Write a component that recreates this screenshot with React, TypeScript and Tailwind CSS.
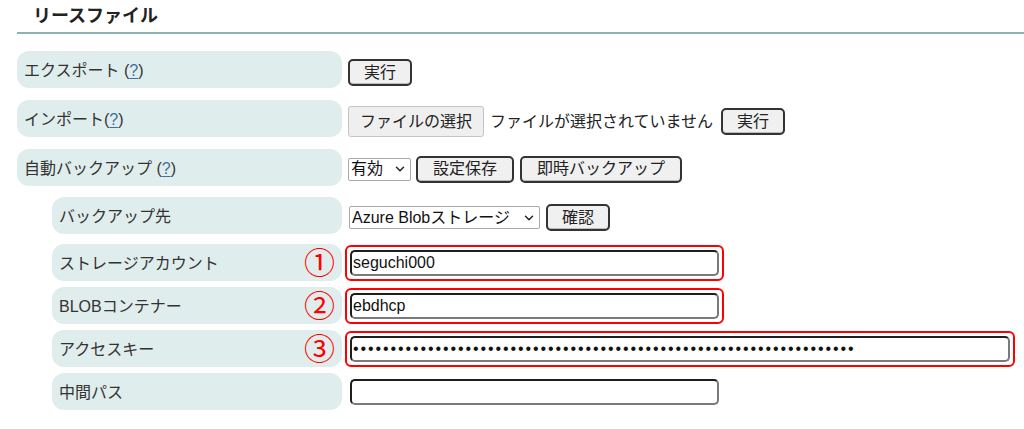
import { ChevronDown } from "lucide-react";
import type { ReactNode } from "react";

function Help() {
  return (
    <>
      (<span className="text-[#3f6fa0] underline underline-offset-2">?</span>)
    </>
  );
}

function Btn({ children, className = "" }: { children: ReactNode; className?: string }) {
  return (
    <button
      className={`h-[27px] rounded-[5px] border-2 border-[#333] bg-[#f0f0f0] px-[14px] text-[16px] leading-none text-[#222] shadow-[inset_0_-1px_0_#bbb] ${className}`}
    >
      {children}
    </button>
  );
}

function Select({ value, width }: { value: string; width: string }) {
  return (
    <div
      className={`flex h-[23px] items-center justify-between rounded-[2px] border border-[#a8a8a8] bg-white pl-[2px] pr-[3px] text-[16px] leading-none text-[#111] ${width}`}
    >
      <span>{value}</span>
      <ChevronDown size={14} strokeWidth={2.5} className="text-[#222]" />
    </div>
  );
}

function Input({ value = "", width, password = false }: { value?: string; width: string; password?: boolean }) {
  return (
    <input
      readOnly
      type={password ? "password" : "text"}
      value={value}
      className={`h-[26px] rounded-[5px] border-2 border-t-[#1e1e1e] border-l-[#1e1e1e] border-r-[#7a7a7a] border-b-[#7a7a7a] bg-white px-[1px] text-[16px] text-[#111] outline-none ${
        password ? "text-[12px] tracking-[1.9px]" : ""
      } ${width}`}
    />
  );
}

function Marked({ children }: { children: ReactNode }) {
  return <div className="-ml-[3px] rounded-[6px] border-2 border-[#ff0000] px-[3px] py-[3px]">{children}</div>;
}

function Row({
  label,
  indent = false,
  mark,
  className,
  children,
}: {
  label: ReactNode;
  indent?: boolean;
  mark?: string;
  className: string;
  children?: ReactNode;
}) {
  return (
    <div className={`flex items-center ${className}`}>
      <div
        className={`relative flex h-[37px] shrink-0 items-center rounded-[12px] bg-[#e0eded] pl-[7px] pt-[2px] text-[16px] text-[#333] ${
          indent ? "ml-[35px] w-[290px]" : "w-[325px]"
        }`}
      >
        {label}
        {mark && (
          <span className="absolute right-[7px] top-1/2 -translate-y-1/2 text-[31px] leading-none text-[#ff0000]">
            {mark}
          </span>
        )}
      </div>
      <div className="ml-[6px] flex items-center">{children}</div>
    </div>
  );
}

export default function App() {
  return (
    <div className="h-[429px] w-[1024px] bg-white font-['Liberation_Sans','Noto_Sans_CJK_JP',sans-serif]">
      <div className="pl-[17px]">
        <div className="h-[34px] border-b-2 border-[#8fb1b1] pl-[16px] pt-[5px] text-[18px] font-bold leading-[22px] text-[#222]">
          リースファイル
        </div>

        <Row className="mt-[17px]" label={<>エクスポート <Help /></>}>
          <Btn className="mt-[6px]">実行</Btn>
        </Row>

        <Row className="mt-[12px]" label={<>インポート<Help /></>}>
          <div className="mt-[6px] flex items-center">
            <button className="h-[31px] rounded-[3px] border border-[#c4c4c4] bg-[#efefef] px-[11px] text-[16px] leading-none text-[#222]">
              ファイルの選択
            </button>
            <span className="ml-[6px] text-[16px] text-[#222]">ファイルが選択されていません</span>
            <Btn className="ml-[8px]">実行</Btn>
          </div>
        </Row>

        <Row className="mt-[12px]" label={<>自動バックアップ <Help /></>}>
          <div className="mt-[3px] flex items-center gap-[5px]">
            <Select value="有効" width="w-[63px]" />
            <Btn className="px-[15px]">設定保存</Btn>
            <Btn className="ml-[1px] px-[15px]">即時バックアップ</Btn>
          </div>
        </Row>

        <Row className="mt-[11px]" indent label="バックアップ先">
          <div className="mt-[4px] flex items-center gap-[6px]">
            <Select value="Azure Blobストレージ" width="w-[191px] ml-[1px]" />
            <Btn className="px-[14px]">確認</Btn>
          </div>
        </Row>

        <Row className="mt-[10px]" indent mark="①" label="ストレージアカウント">
          <Marked>
            <Input value="seguchi000" width="w-[369px]" />
          </Marked>
        </Row>

        <Row className="mt-[6px]" indent mark="②" label="BLOBコンテナー">
          <Marked>
            <Input value="ebdhcp" width="w-[369px]" />
          </Marked>
        </Row>

        <Row className="mt-[6px]" indent mark="③" label="アクセスキー">
          <Marked>
            <Input password value={"x".repeat(67)} width="w-[660px]" />
          </Marked>
        </Row>

        <Row className="mt-[6px]" indent label="中間パス">
          <div className="ml-[2px]">
            <Input width="w-[369px]" />
          </div>
        </Row>
      </div>
    </div>
  );
}
